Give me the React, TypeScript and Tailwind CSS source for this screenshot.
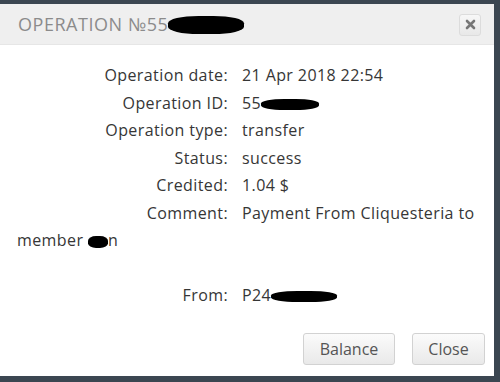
import React from "react";

const font = { fontFamily: "'Open Sans', 'Liberation Sans', sans-serif" };

const rows: { label: string; value: React.ReactNode }[] = [
  { label: "Operation date:", value: "21 Apr 2018 22:54" },
  {
    label: "Operation ID:",
    value: (
      <>
        55
        <Blot className="w-[58px] h-[11px]" />
      </>
    ),
  },
  { label: "Operation type:", value: "transfer" },
  { label: "Status:", value: "success" },
  { label: "Credited:", value: "1.04 $" },
];

function Blot({ className }: { className: string }) {
  return <span className={`inline-block bg-black rounded-[40%] align-middle ${className}`} />;
}

function Label({ children }: { children: React.ReactNode }) {
  return (
    <span className="inline-block w-[211px] mr-[14px] text-right text-[#363636]">{children}</span>
  );
}

export default function App() {
  return (
    <div className="w-[500px] h-[382px] bg-[#3b4651] pt-1 pr-[6px] pb-[6px]" style={font}>
      <div className="flex flex-col h-full bg-white">
        {/* Header */}
        <div className="h-[41px] bg-[#efefef] border-b border-[#e6e6e6] flex items-center justify-between pl-[18px] pr-[13px]">
          <div className="flex items-center text-[18px] tracking-[0.03em] text-[#8b8b8b]">
            OPERATION №55
            <Blot className="w-[76px] h-[18px] mt-[2px]" />
          </div>
          <button className="w-[22px] h-[22px] mt-[1px] border border-[#dcdcdc] rounded-[3px] bg-gradient-to-b from-[#f7f7f7] to-[#e8e8e8] flex items-center justify-center">
            <svg width="11" height="11" viewBox="0 0 11 11">
              <path d="M2 2 L9 9 M9 2 L2 9" stroke="#777" strokeWidth="2.6" strokeLinecap="round" />
            </svg>
          </button>
        </div>

        {/* Body */}
        <div className="flex-1 pl-[17px] pr-3 pt-[17px] text-[16px] tracking-[0.025em] leading-[27.5px] text-[#363636]">
          {rows.map((r) => (
            <div key={r.label}>
              <Label>{r.label}</Label>
              {r.value}
            </div>
          ))}
          <div>
            <Label>Comment:</Label>
            Payment From Cliquesteria to
          </div>
          <div>
            member <Blot className="w-[20px] h-[12px]" />n
          </div>
          <div className="mt-[27px]">
            <Label>From:</Label>
            P24
            <Blot className="w-[66px] h-[11px]" />
          </div>
        </div>

        {/* Footer */}
        <div className="flex justify-end gap-[17px] pr-[9px] pb-[11px]">
          <button className="w-[92px] h-[32px] border border-[#d2d2d2] rounded-[3px] bg-gradient-to-b from-[#fbfbfb] to-[#e9e9e9] text-[16px] text-[#555]">
            Balance
          </button>
          <button className="w-[73px] h-[32px] border border-[#d2d2d2] rounded-[3px] bg-gradient-to-b from-[#fbfbfb] to-[#e9e9e9] text-[16px] text-[#555]">
            Close
          </button>
        </div>
      </div>
    </div>
  );
}
